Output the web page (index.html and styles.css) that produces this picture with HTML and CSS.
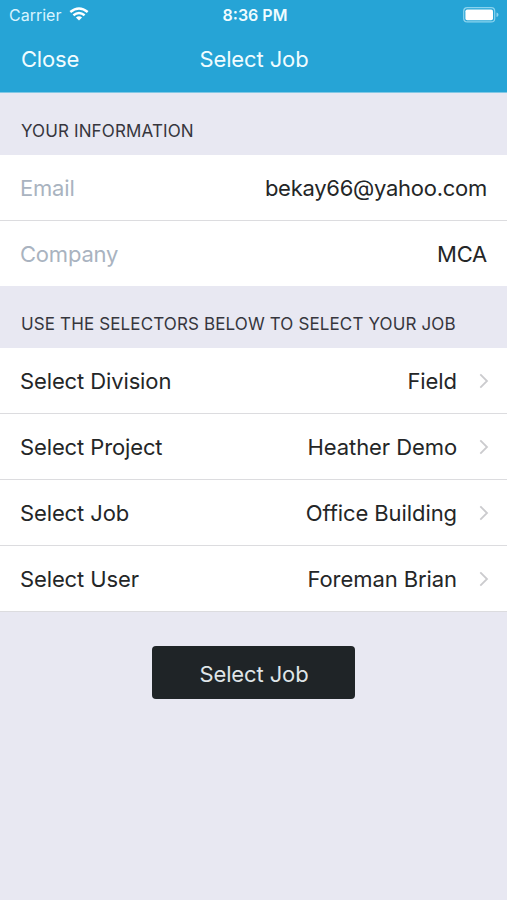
FILE: index.html
```html
<!DOCTYPE html>
<html lang="en">
<head>
<meta charset="utf-8">
<title>Select Job</title>
<link rel="stylesheet" href="styles.css">
</head>
<body>
<header class="header">
  <div class="status">
    <div class="carrier"><span>Carrier</span>
      <svg class="wifi" width="20" height="14" viewBox="0 0 20 14" fill="none" stroke="#fff" stroke-width="2.5"><path d="M1.3 5Q10 -2 18.7 5M4.4 8.3Q10 3.8 15.6 8.3"/><path d="M10 13.5L6.9 10.4Q10 8 13.1 10.4Z" fill="#fff" stroke="none"/></svg>
    </div>
    <span class="time">8:36 PM</span>
    <svg class="battery" width="36" height="16" viewBox="0 0 36 16"><rect x=".7" y=".7" width="31" height="14.2" rx="3.5" fill="none" stroke="#8bd3ee" stroke-width="1.2"/><rect x="2.4" y="2.4" width="27.6" height="10.8" rx="1.8" fill="#fff"/><path d="M33.5 5.5Q35.5 6 35.5 7.8T33.5 10.1Z" fill="#8bd3ee"/></svg>
  </div>
  <nav class="nav"><span class="close">Close</span><h1 class="title">Select Job</h1></nav>
</header>
<main>
  <h2 class="section">YOUR INFORMATION</h2>
  <div class="row"><span class="label muted">Email</span><span class="value mail">bekay66@yahoo.com</span></div>
  <div class="row last"><span class="label muted">Company</span><span class="value mca">MCA</span></div>
  <h2 class="section">USE THE SELECTORS BELOW TO SELECT YOUR JOB</h2>
  <div class="row"><span class="label">Select Division</span><span class="value">Field</span><svg class="chevron" width="10" height="16" viewBox="0 0 10 16"><path d="M1.3 1.3L8 8L1.3 14.7"/></svg></div>
  <div class="row"><span class="label">Select Project</span><span class="value">Heather Demo</span><svg class="chevron" width="10" height="16" viewBox="0 0 10 16"><path d="M1.3 1.3L8 8L1.3 14.7"/></svg></div>
  <div class="row"><span class="label">Select Job</span><span class="value">Office Building</span><svg class="chevron" width="10" height="16" viewBox="0 0 10 16"><path d="M1.3 1.3L8 8L1.3 14.7"/></svg></div>
  <div class="row"><span class="label">Select User</span><span class="value">Foreman Brian</span><svg class="chevron" width="10" height="16" viewBox="0 0 10 16"><path d="M1.3 1.3L8 8L1.3 14.7"/></svg></div>
  <button class="submit">Select Job</button>
</main>
</body>
</html>
```
FILE: styles.css
```css
* { box-sizing: border-box; }
body {
  margin: 0;
  min-height: 900px;
  background: #e8e8f2;
  color: #242627;
  font-family: Inter, "Liberation Sans", sans-serif;
  font-size: 22px;
  letter-spacing: -0.12px;
}
h1, h2 { margin: 0; font-weight: 400; }
.header {
  height: 93px;
  background: #26a4d6;
  border-bottom: 1px solid #82c8e5;
  color: #f0fcff;
}
.status {
  display: grid;
  grid-template-columns: 1fr auto 1fr;
  height: 30px;
  padding: 0 8px 0 9px;
  align-items: center;
  font-size: 16px;
}
.carrier { display: flex; align-items: center; gap: 8px; letter-spacing: 0; color: #d7f4ff; }
.wifi { margin-top: -2px; }
.time { padding-left: 2px; font-weight: 600; letter-spacing: 0; }
.battery { justify-self: end; }
.nav {
  display: grid;
  grid-template-columns: 1fr auto 1fr;
  height: 58px;
  padding: 0 21px;
  align-items: center;
}
.close { letter-spacing: -0.2px; }
.title { padding-left: 1px; font-size: 22px; }
.section {
  height: 62px;
  padding: 26px 21px 0;
  font-size: 17px;
  line-height: 24px;
  letter-spacing: 0.13px;
  color: #36363d;
}
.row {
  display: flex;
  height: 66px;
  padding: 0 18px 0 20px;
  align-items: center;
  background: #fff;
  border-bottom: 1px solid #dcdcdf;
}
.row.last { height: 65px; border-bottom: 0; }
.value { margin-left: auto; letter-spacing: -0.08px; }
.mail, .mca { margin-right: 2px; letter-spacing: -0.27px; }
.muted { color: #a9b3c0; letter-spacing: -0.2px; }
.chevron {
  margin-left: 22px;
  fill: none;
  stroke: #cbcbce;
  stroke-width: 1.8;
}
.submit {
  display: block;
  width: 203px;
  height: 53px;
  margin: 34px auto 0;
  padding: 2px 0 0 1px;
  border: 0;
  border-radius: 4px;
  background: #1f2427;
  color: #dfe5e8;
  font: inherit;
  letter-spacing: inherit;
}
```
